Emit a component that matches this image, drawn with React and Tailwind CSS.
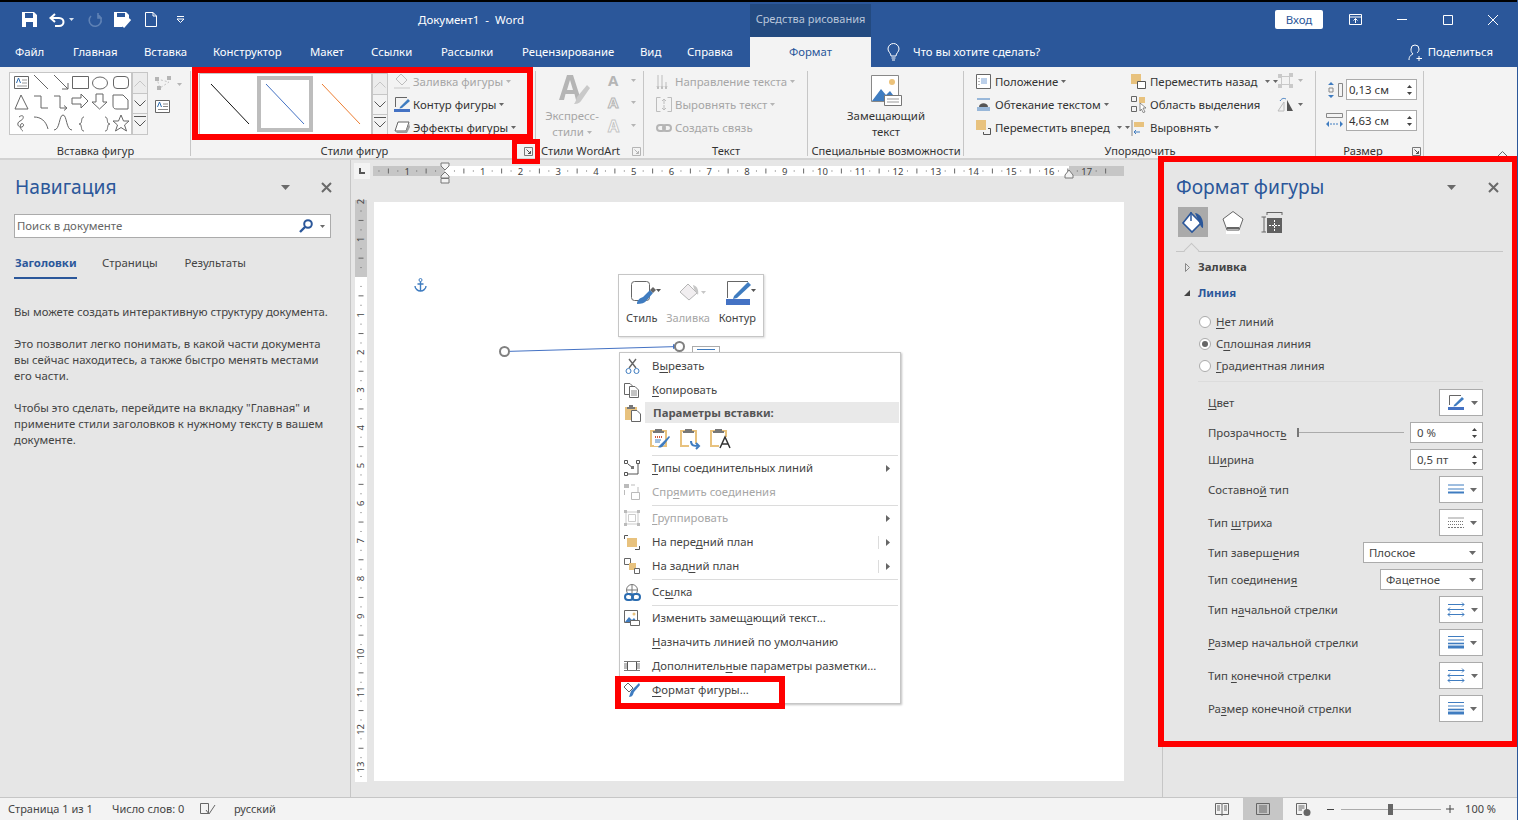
import React from "react";

const S = ({ w, h, children, className = "" }) => (
  <svg width={w} height={h} viewBox={`0 0 ${w} ${h}`} fill="none" className={`shrink-0 overflow-visible ${className}`}>
    {children}
  </svg>
);

// "В_ырезать" -> the letter after _ is underlined
const U = ({ t }) => {
  const i = t.indexOf("_");
  if (i < 0) return <span>{t}</span>;
  return (
    <span>
      {t.slice(0, i)}
      <span className="underline underline-offset-2">{t[i + 1]}</span>
      {t.slice(i + 2)}
    </span>
  );
};

const Caret = ({ c = "#6a6a6a", w = 7, h = 4, className = "" }) => (
  <S w={w} h={h} className={className}>
    <path d={`M0 0H${w}L${w / 2} ${h}Z`} fill={c} />
  </S>
);

const Close = () => (
  <S w={11} h={11}>
    <path d="M1 1L10 10M10 1L1 10" stroke="#6a6a6a" strokeWidth="2" />
  </S>
);

const Launcher = ({ off }) => (
  <S w={9} h={9}>
    <path d="M.5.5H8.5V8.5H.5Z" stroke={off ? "#b5b5b5" : "#777"} />
    <path d="M2.5 2.5L6.5 6.5M6.5 4V6.5H4" stroke={off ? "#b5b5b5" : "#555"} />
  </S>
);

/* ---------- title bar ---------- */
const QatSave = () => (
  <S w={15} h={15}>
    <path d="M0 0H12L15 3V15H0Z" fill="#fff" />
    <path d="M3 1H11V6H3Z" fill="#2b579a" />
    <path d="M4 10H11V15H4Z" fill="#2b579a" />
  </S>
);

function TitleBar() {
  return (
    <div className="flex h-[35px] items-center bg-[#2b579a] text-white">
      <div className="ml-[15px] flex h-full w-[180px] items-center">
        <div className="flex w-[28px] justify-center"><QatSave /></div>
        <div className="flex w-[39px] items-center pl-[6px]">
          <S w={17} h={14}>
            <path d="M6 1L1.5 5L6 9" stroke="#fff" strokeWidth="2" />
            <path d="M2 5H10C16 5 16 13 10 13H6" stroke="#fff" strokeWidth="2" />
          </S>
          <Caret c="#d9e2ef" w={5} h={3} className="ml-[3px]" />
        </div>
        <div className="flex w-[26px] justify-center">
          <S w={14} h={14}>
            <path d="M3 3A6 6 0 1 0 10 2M10 0V5H14" stroke="#5f82b5" strokeWidth="1.6" />
          </S>
        </div>
        <div className="flex w-[29px] justify-center">
          <S w={17} h={16}>
            <path d="M0 0H12L15 3V7L8 15H0Z" fill="#fff" />
            <path d="M3 1H11V5H3Z" fill="#2b579a" />
            <path d="M9 15L16 7" stroke="#fff" strokeWidth="3" />
          </S>
        </div>
        <div className="flex w-[28px] justify-center">
          <S w={12} h={15}>
            <path d="M.5.5H8L11.5 4V14.5H.5Z M8 .5V4H11.5" stroke="#fff" />
          </S>
        </div>
        <div className="flex w-[30px] justify-center">
          <S w={9} h={7}>
            <path d="M1 .5H8M1 3H8L4.5 6.5Z" stroke="#fff" />
          </S>
        </div>
      </div>
      <div className="w-[223px]" />
      <div className="w-[332px] text-[11.5px]">Документ1 &nbsp;-&nbsp; Word</div>
      <div className="mt-[2px] flex h-[33px] w-[121px] items-center justify-center bg-[#234a80] pb-[2px] text-[11px] text-[#b9c6da]">
        Средства рисования
      </div>
      <div className="w-[404px]" />
      <div className="flex h-[19px] w-[48px] items-center justify-center rounded-[2px] bg-white text-[11.5px] text-[#2b579a]">Вход</div>
      <div className="ml-[22px] flex w-[21px] justify-center">
        <S w={13} h={11}>
          <path d="M.5.5H12.5V10.5H.5ZM0 3H13" stroke="#fff" />
          <path d="M6.5 9V4.5M4.5 6.5L6.5 4.5L8.5 6.5" stroke="#fff" />
        </S>
      </div>
      <div className="ml-[31px]"><S w={10} h={1}><path d="M0 .5H10" stroke="#fff" /></S></div>
      <div className="ml-[36px]"><S w={10} h={10}><path d="M.5.5H9.5V9.5H.5Z" stroke="#fff" /></S></div>
      <div className="ml-[35px]"><S w={10} h={10}><path d="M0 0L10 10M10 0L0 10" stroke="#fff" /></S></div>
    </div>
  );
}

/* ---------- tabs ---------- */
const tabs = [
  ["Файл", 58], ["Главная", 71], ["Вставка", 69], ["Конструктор", 97], ["Макет", 61],
  ["Ссылки", 70], ["Рассылки", 81], ["Рецензирование", 118], ["Вид", 47], ["Справка", 63],
];

function TabBar() {
  return (
    <div className="flex h-[30px] bg-[#2b579a] pl-[15px] text-[11.35px] text-white">
      {tabs.map(([t, w]) => (
        <div key={t} style={{ width: w }} className="flex items-center">{t}</div>
      ))}
      <div className="flex w-[121px] items-center justify-center bg-[#f3f3f3] text-[#2b579a]">Формат</div>
      <div className="ml-[16px] flex items-center">
        <S w={13} h={17}>
          <path d="M4 12C4 9 1 8 1 5A5.5 5.5 0 0 1 12 5C12 8 9 9 9 12ZM4.5 14H8.5M5 16H8" stroke="#fff" />
        </S>
      </div>
      <div className="ml-[13px] flex items-center">Что вы хотите сделать?</div>
      <div className="ml-auto mr-[24px] flex items-center gap-[5px]">
        <S w={15} h={17}>
          <path d="M1 16C1 12 3 11 5 10C3 8 3 7 3 5A4 4 0 0 1 11 5C11 7 10 8 9 9" stroke="#fff" />
          <path d="M11 12V17M8.5 14.5H14" stroke="#fff" />
        </S>
        Поделиться
      </div>
    </div>
  );
}

/* ---------- ribbon ---------- */
function Group({ w, label, launcher, off, sep = true, children }) {
  return (
    <div style={{ width: w }} className="relative flex h-full shrink-0 flex-col">
      <div className="h-[75px] shrink-0 overflow-hidden">{children}</div>
      <div className="flex h-[14px] items-center justify-center whitespace-nowrap text-[11.1px] text-[#333]">{label}</div>
      {launcher && (
        <div className="absolute bottom-[2px] right-[3px]"><Launcher off={off} /></div>
      )}
      {sep && <div className="absolute bottom-[2px] right-0 top-[2px] w-px bg-[#c6c6c6]" />}
    </div>
  );
}

const GalleryScroll = ({ big }) => (
  <div className={`flex w-[16px] flex-col border border-[#c6c6c6] bg-[#f3f3f3] ${big ? "h-[62px]" : "h-[63px]"}`}>
    <div className="flex h-[21px] items-center justify-center border-b border-[#c6c6c6] bg-[#ececec]">
      <S w={12} h={7}><path d="M.5 6.5L6 1L11.5 6.5" stroke="#c6c6c6" /></S>
    </div>
    <div className="flex h-[20px] items-center justify-center border-b border-[#c6c6c6]">
      <S w={12} h={7}><path d="M.5.5L6 6L11.5.5" stroke="#555" /></S>
    </div>
    <div className="flex flex-1 flex-col items-center gap-[3px] pt-[2px]">
      <div className="h-px w-[12px] bg-[#555]" />
      <S w={12} h={7}><path d="M.5.5L6 6L11.5.5" stroke="#555" /></S>
    </div>
  </div>
);

const TextboxIcon = () => (
  <S w={15} h={13}>
    <path d="M.5.5H14.5V12.5H.5Z" stroke="#666" fill="#fff" />
    <path d="M8 4H13M8 6.5H13M3 9.5H13" stroke="#888" />
    <path d="M2.5 7L4.5 2L6.5 7" stroke="#2b6cb0" />
  </S>
);

const ShapesGallery = () => (
  <div className="h-[63px] w-[123px] border border-[#c6c6c6] bg-white">
    <S w={121} h={61}>
      <g stroke="#666">
        <path d="M4.5 3.5H18.5V15.5H4.5Z" />
        <path d="M12 7H17M12 10H17M7 13H17" stroke="#999" />
        <path d="M6.5 10L8.5 5L10.5 10" stroke="#2b6cb0" />
        <path d="M24 2L38 16" />
        <path d="M44 2L58 16M52 16H58V10" />
        <path d="M62.5 3.5H78.5V15.5H62.5Z" />
        <ellipse cx="90" cy="10" rx="7.5" ry="6" />
        <rect x="103.5" y="3.5" width="15" height="12" rx="3.5" />
        <path d="M5 36L11 22L18 36Z" />
        <path d="M24 23H31V35H38" />
        <path d="M44 23H50V35H56M54 32.5L57 35L54 37.5" />
        <path d="M62 25H71V21L78 28L71 35V31H62Z" />
        <path d="M86 21H93V29H97L89.5 36L82 29H86Z" />
        <path d="M103 22H113L118 27V36H107C103 36 103 34 103 31Z" />
        <path d="M9 44C14 40 15 46 10 48C6 50 8 55 12 54C15 53 13 49 11 51C9 54 12 58 13 58" />
        <path d="M24 44C31 44 36 48 38 56" />
        <path d="M44 57C50 57 49 42 53 42C57 42 56 57 62 57" />
        <path d="M74 44C71 44 72 49 71 50C70 51 69 51 69 51C71 51 71 52 71 53C72 55 71 58 74 58" />
        <path d="M95 44C98 44 97 49 98 50C99 51 100 51 100 51C98 51 98 52 98 53C97 55 98 58 95 58" />
        <path d="M111 42L113.5 48H119L114.5 52L116.5 58L111 54.5L105.5 58L107.5 52L103 48H108.5Z" />
      </g>
    </S>
  </div>
);

const RibbonBtn = ({ icon, children, off, caret = true, className = "" }) => (
  <div className={`flex h-[23px] items-center whitespace-nowrap text-[11.4px] ${off ? "text-[#a6a6a6]" : "text-[#333]"} ${className}`}>
    <span className="flex w-[19px] shrink-0 items-center justify-start">{icon}</span>
    {children}
    {caret && <Caret c={off ? "#b5b5b5" : "#666"} w={5} h={3} className="ml-[3px]" />}
  </div>
);

const PenIcon = ({ w = 17, h = 15 }) => (
  <S w={w} h={h}>
    <path d="M13 .5H1.5V10" stroke="#666" />
    <path d="M6 10L14 2L16 4L8 11L5.5 11.5Z" fill="#3f7cc0" />
    <path d="M0 12H16V15H0Z" fill="#4472c4" />
  </S>
);

function Ribbon() {
  return (
    <div className="flex h-[93px] shrink-0 border-b-2 border-[#d2d2d2] bg-[#f3f3f3] pt-[2px]">
      <Group w={191} label="Вставка фигур">
        <div className="flex pl-[9px] pt-[3px]">
          <ShapesGallery />
          <GalleryScroll />
          <div className="ml-[6px] flex flex-col gap-[8px] pt-[4px]">
            <div className="flex items-center gap-[3px]">
              <S w={20} h={16}>
                <path d="M3 3L15 6L6 12Z" stroke="#c4c4c4" strokeDasharray="2 2" />
                <path d="M1 1H5V5H1ZM13 0H17V4H13ZM3 10H7V14H3Z" fill="#b5b5b5" />
              </S>
              <Caret c="#b5b5b5" w={5} h={3} />
            </div>
            <div className="pl-[1px]"><TextboxIcon /></div>
          </div>
        </div>
      </Group>

      <Group w={345} label={<span className="mr-[18px]">Стили фигур</span>} launcher>
        <div className="flex pl-[8px] pt-[4px]">
          <div className="flex h-[62px] w-[173px] items-center border border-[#c6c6c6] bg-white pl-[10px]">
            <S w={40} h={42}><path d="M1 1L39 41" stroke="#111" /></S>
            <div className="ml-[7px] flex h-[56px] w-[56px] items-center justify-center border-[4px] border-[#bdbdbd]">
              <S w={38} h={40}><path d="M0 0L38 40" stroke="#4472c4" /></S>
            </div>
            <S w={40} h={42} className="ml-[8px]"><path d="M1 1L39 41" stroke="#ed7d31" /></S>
          </div>
          <GalleryScroll big />
          <div className="ml-[6px] -mt-[3px] flex flex-col">
            <RibbonBtn off icon={
              <S w={17} h={17}>
                <path d="M7 1L13 7L8 12L2 6Z" stroke="#bdbdbd" />
                <path d="M0 14H16V16H0Z" fill="#dedede" />
              </S>}>Заливка фигуры</RibbonBtn>
            <RibbonBtn icon={<PenIcon />}>Контур фигуры</RibbonBtn>
            <RibbonBtn icon={
              <S w={17} h={13}>
                <path d="M4 1H15L12 10H1Z" fill="#fff" stroke="#666" />
                <path d="M1 10H12L15 2L16 6L13 12H3Z" fill="#a0a0a0" />
              </S>}>Эффекты фигуры</RibbonBtn>
          </div>
        </div>
      </Group>

      <Group w={108} label={<span className="mr-[19px]">Стили WordArt</span>} launcher off>
        <div className="flex pl-[8px] pt-[4px]">
          <div className="flex w-[56px] flex-col items-center text-[11.4px] leading-[16px] text-[#a6a6a6]">
            <S w={34} h={32} className="mb-[3px] ml-[3px]">
              <path d="M2 27L10 2H16L24 27H19L17.5 21H8.5L7 27ZM10 17H16L13 7Z" fill="#b5b5b5" />
              <path d="M20 24L30 12L33 15L24 28C22 31 18 31 17 31C19 29 19 26 20 24Z" fill="#c9c9c9" />
            </S>
            <span>Экспресс-</span>
            <span className="flex items-center gap-[3px]">стили <Caret c="#b5b5b5" w={5} h={3} /></span>
          </div>
          <div className="-mt-[4px] ml-[8px] flex flex-col">
            <div className="flex h-[22px] w-[28px] items-center justify-between text-[15px] font-bold text-[#b5b5b5]">A<Caret c="#b5b5b5" w={5} h={3} /></div>
            <div className="flex h-[22px] w-[28px] items-center justify-between text-[15px] font-bold text-transparent [-webkit-text-stroke:1px_#b5b5b5]">A<Caret c="#b5b5b5" w={5} h={3} /></div>
            <div className="flex h-[25px] w-[28px] items-center justify-between text-[16px] font-bold text-white [-webkit-text-stroke:1px_#c6c6c6]">A<Caret c="#b5b5b5" w={5} h={3} /></div>
          </div>
        </div>
      </Group>

      <Group w={164} label="Текст">
        <div className="flex flex-col pl-[12px] pt-[1px]">
          <RibbonBtn off icon={
            <S w={16} h={16}><path d="M2 1V15M6 1V15M10 8V15M1 12L2 15L3 12M5 12L6 15L7 12M9 12L10 15L11 12" stroke="#bdbdbd" /></S>}>Направление текста</RibbonBtn>
          <RibbonBtn off icon={
            <S w={16} h={15}><path d="M4.5.5H.5V14.5H4.5M11.5.5H15.5V14.5H11.5M8 2V7M6 4L8 2L10 4M8 8V13M6 11L8 13L10 11" stroke="#bdbdbd" /></S>}>Выровнять текст</RibbonBtn>
          <RibbonBtn off caret={false} icon={
            <S w={16} h={8}><rect x="1" y="1" width="8" height="6" rx="3" stroke="#b5b5b5" strokeWidth="2" /><rect x="7" y="1" width="8" height="6" rx="3" stroke="#b5b5b5" strokeWidth="2" /></S>}>Создать связь</RibbonBtn>
        </div>
      </Group>

      <Group w={156} label="Специальные возможности">
        <div className="flex flex-col items-center pt-[6px] text-[11.4px] leading-[16px] text-[#333]">
          <S w={31} h={31} className="mb-[2px]">
            <path d="M.5.5H27.5V26.5H.5Z" stroke="#888" fill="#fff" />
            <circle cx="21" cy="7" r="3" fill="#ecc27a" />
            <path d="M1 26L10 14L15 20L19 16L25 24V26Z" fill="#3f7cc0" />
            <path d="M13.5 20.5H30.5V30.5H13.5Z" stroke="#777" fill="#fff" />
            <path d="M16 24H28M16 27H28" stroke="#999" />
          </S>
          <span>Замещающий</span>
          <span>текст</span>
        </div>
      </Group>

      <Group w={352} label="Упорядочить">
        <div className="flex pl-[12px] pt-[1px]">
          <div className="flex w-[155px] flex-col">
            <RibbonBtn icon={
              <S w={15} h={15}>
                <path d="M.5.5H14.5V14.5H.5Z" stroke="#666" fill="#fff" />
                <path d="M5 4H11V10H5Z" fill="#bcd0ea" />
                <path d="M3 4V5M3 7V8M3 10V11" stroke="#777" />
              </S>}>Положение</RibbonBtn>
            <RibbonBtn icon={
              <S w={15} h={13}>
                <path d="M1 1H14M1 12H14M1 10H14" stroke="#3f7cc0" />
                <path d="M3 9C3 4 12 4 12 9Z" fill="#555" />
              </S>}>Обтекание текстом</RibbonBtn>
            <RibbonBtn icon={
              <S w={15} h={15}>
                <path d="M0 0H10V10H0Z" fill="#e8c27e" />
                <path d="M12 8.5H14.5V14.5H7.5V12" stroke="#555" />
              </S>}>
              Переместить вперед<span className="ml-[7px]"><Caret w={5} h={3} /></span>
            </RibbonBtn>
          </div>
          <div className="flex w-[146px] flex-col">
            <RibbonBtn icon={
              <S w={15} h={15}>
                <path d="M0 0H10V10H0Z" fill="#e8c27e" />
                <path d="M6.5 7.5H14.5V14.5H6.5Z" stroke="#555" fill="#fff" />
              </S>}>
              Переместить назад<span className="ml-[8px]"><Caret w={5} h={3} /></span>
            </RibbonBtn>
            <RibbonBtn caret={false} icon={
              <S w={16} h={17}>
                <path d="M.5.5H5.5V5.5H.5ZM.5 10.5H5.5V15.5H.5Z" stroke="#666" />
                <path d="M8 1H14V7H8Z" fill="#e8c27e" />
                <path d="M9 7L15 12L12 12L14 16L12 16.5L10.5 13L9 15Z" fill="#fff" stroke="#666" strokeWidth=".7" />
              </S>}>Область выделения</RibbonBtn>
            <RibbonBtn icon={
              <S w={15} h={16}>
                <path d="M1 0V16" stroke="#888" />
                <path d="M3 2H13V7H3Z" fill="#e8c27e" />
                <path d="M7 12H3M5 10L3 12L5 14M9 12H7" stroke="#3f7cc0" />
              </S>}>Выровнять</RibbonBtn>
          </div>
          <div className="flex flex-col gap-[5px] pt-[3px]">
            <div className="flex items-center gap-[4px]">
              <S w={17} h={15}>
                <path d="M1 1H5V5H1ZM12 0H16V4H12ZM1 11H5V15H1ZM12 11H16V15H12Z" fill="#c9c9c9" />
                <path d="M4.5 3.5H12.5V11.5H4.5Z" stroke="#c9c9c9" />
              </S>
              <Caret c="#b5b5b5" w={5} h={3} />
            </div>
            <div className="mt-[4px] flex items-center gap-[4px]">
              <S w={17} h={15}>
                <path d="M1 14L7 5V14Z" stroke="#bbb" />
                <path d="M10 3L16 14H10Z" fill="#555" />
                <path d="M3 4C5 1 7 1 9 2" stroke="#3f7cc0" />
              </S>
              <Caret w={5} h={3} />
            </div>
          </div>
        </div>
      </Group>

      <Group w={108} label={<span className="mr-[14px]">Размер</span>} launcher>
        <div className="flex flex-col gap-[10px] pl-[10px] pt-[10px]">
          {[["0,13 см", 0], ["4,63 см", 1]].map(([v, i]) => (
            <div key={v} className="flex items-center gap-[3px]">
              {i === 0 ? (
                <S w={17} h={16}>
                  <path d="M5 0L2 3H8ZM5 16L2 13H8Z" fill="#3f7cc0" />
                  <path d="M3 6H7V10H3Z" stroke="#888" />
                  <path d="M12.5 1.5H16.5V14.5H12.5Z" stroke="#888" />
                </S>
              ) : (
                <S w={17} h={16}>
                  <path d="M.5.5H16.5V4.5H.5Z" stroke="#888" />
                  <path d="M0 11L3 8V14ZM17 11L14 8V14Z" fill="#3f7cc0" />
                  <path d="M4 11H13" stroke="#3f7cc0" strokeDasharray="2 1" />
                </S>
              )}
              <div className="flex h-[21px] w-[71px] items-center justify-between border border-[#ababab] bg-white pl-[2px] pr-[4px] text-[11.4px] text-[#333]">
                {v}
                <Spin />
              </div>
            </div>
          ))}
        </div>
      </Group>

      <div className="relative flex-1">
        <div className="absolute bottom-[1px] right-[9px]">
          <S w={11} h={6}><path d="M.5 5.5L5.5.5L10.5 5.5" stroke="#666" /></S>
        </div>
      </div>
    </div>
  );
}

const Spin = () => (
  <span className="flex flex-col gap-[4px]">
    <S w={5} h={3}><path d="M2.5 0L5 3H0Z" fill="#444" /></S>
    <S w={5} h={3}><path d="M0 0H5L2.5 3Z" fill="#444" /></S>
  </span>
);

/* ---------- navigation pane ---------- */
function NavPane() {
  return (
    <div className="w-[351px] shrink-0 border-r border-[#c6c6c6] bg-[#e6e6e6] pl-[14px] pr-[19px] pt-[13px] text-[#444]">
      <div className="flex h-[28px] items-center justify-between">
        <span className="pl-[1px] text-[19.2px] text-[#2b579a]">Навигация</span>
        <span className="-mr-[1px] flex items-center gap-[31px]">
          <Caret w={9} h={5} />
          <Close />
        </span>
      </div>
      <div className="mt-[13px] flex h-[24px] items-center border border-[#ababab] bg-white pl-[2px] pr-[5px] text-[11.4px] text-[#666]">
        Поиск в документе
        <span className="ml-auto flex items-center gap-[7px]">
          <S w={14} h={14}>
            <circle cx="9" cy="5" r="3.8" stroke="#2b579a" strokeWidth="2" />
            <path d="M6 8L1 13" stroke="#2b579a" strokeWidth="2.4" />
          </S>
          <Caret w={5} h={3} />
        </span>
      </div>
      <div className="mt-[15px] flex h-[26px] items-start text-[11.4px]">
        <span className="h-[26px] w-[63px] border-b-2 border-[#2b579a] pl-[1px] pt-[1px] font-bold text-[#2b579a]">Заголовки</span>
        <span className="ml-[25px] pt-[1px]">Страницы</span>
        <span className="ml-[27px] pt-[1px]">Результаты</span>
      </div>
      <div className="mt-[25px] flex flex-col gap-[16px] whitespace-nowrap text-[11.35px] leading-[16px]">
        <p>Вы можете создать интерактивную структуру документа.</p>
        <p>Это позволит легко понимать, в какой части документа<br />вы сейчас находитесь, а также быстро менять местами<br />его части.</p>
        <p>Чтобы это сделать, перейдите на вкладку "Главная" и<br />примените стили заголовков к нужному тексту в вашем<br />документе.</p>
      </div>
    </div>
  );
}

/* ---------- rulers and page ---------- */
const HRuler = () => {
  const ticks = [];
  for (let i = -1.75; i <= 17.5; i += 0.25) {
    const x = 72 + i * 37.75;
    if (Number.isInteger(i)) {
      if (i !== 0)
        ticks.push(<text key={i} x={x} y={11.5} textAnchor="middle" fontSize="9.5" fill="#444" fontFamily="Noto Sans">{Math.abs(i)}</text>);
    } else if (i * 2 === Math.floor(i * 2)) {
      ticks.push(<path key={i} d={`M${x} 5.5V10.5`} stroke="#666" />);
    } else {
      ticks.push(<path key={i} d={`M${x} 7.5V8.5`} stroke="#666" />);
    }
  }
  return (
    <S w={751} h={16}>
      <rect y="3" width="751" height="10" fill="#fff" />
      <rect y="3" width="72" height="10" fill="#c6c6c6" />
      <rect x="696" y="3" width="55" height="10" fill="#c6c6c6" />
      {ticks}
      <path d="M68 0H76V3L72 7L68 3ZM72 9L76 13V15H68V13Z" fill="#f3f3f3" stroke="#777" />
      <path d="M68 15.5H76V20H68Z" fill="#f3f3f3" stroke="#777" />
      <path d="M696 7L692 12V15H700V12Z" fill="#f3f3f3" stroke="#777" />
    </S>
  );
};

const VRuler = () => {
  const ticks = [];
  for (let i = -2; i <= 13.25; i += 0.25) {
    const y = 77 + i * 37.7;
    if (Number.isInteger(i)) {
      if (i !== 0)
        ticks.push(
          <text key={i} x={6} y={y} textAnchor="middle" dominantBaseline="middle" fontSize="9.5" fill="#444" fontFamily="Noto Sans" transform={`rotate(-90 6 ${y})`}>
            {Math.abs(i)}
          </text>
        );
    } else if (i * 2 === Math.floor(i * 2)) {
      ticks.push(<path key={i} d={`M3.5 ${y}H8.5`} stroke="#666" />);
    } else {
      ticks.push(<path key={i} d={`M5.5 ${y}H6.5`} stroke="#666" />);
    }
  }
  return (
    <S w={12} h={582}>
      <rect width="12" height="582" fill="#fff" />
      <rect width="12" height="77" fill="#c6c6c6" />
      {ticks}
    </S>
  );
};

function DocArea() {
  return (
    <div className="flex min-w-0 flex-1 flex-col bg-[#e6e6e6]">
      <div className="flex h-[42px] pl-[3px] pt-[3px]">
        <div className="flex h-[16px] w-[16px] items-center justify-center bg-[#f3f3f3]">
          <S w={6} h={6}><path d="M1 0V5H6" stroke="#555" strokeWidth="2" /></S>
        </div>
        <div className="ml-[3px]"><HRuler /></div>
      </div>
      <div className="flex pl-[4px]">
        <div className="-mt-[2px]"><VRuler /></div>
        <div className="ml-[7px] h-[579px] w-[750px] bg-white" />
      </div>
    </div>
  );
}

/* ---------- format pane ---------- */
const CtlIcon = ({ kind }) => {
  if (kind === "pen") return <PenIcon />;
  if (kind === "compound")
    return (
      <S w={16} h={11}>
        <path d="M0 1H16M0 5H16" stroke="#3f7cc0" />
        <path d="M0 8.5H16" stroke="#3f7cc0" strokeWidth="2" />
      </S>
    );
  if (kind === "dash")
    return (
      <S w={16} h={11}>
        <path d="M0 1H16" stroke="#999" />
        <path d="M0 4.5H16M0 7.5H16" stroke="#777" strokeDasharray="1 1" />
        <path d="M0 10.5H16" stroke="#777" strokeDasharray="2 1" />
      </S>
    );
  if (kind === "arrow")
    return (
      <S w={17} h={15}>
        <path d="M0 2.5H16M14 .5L16 2.5L14 4.5M0 7.5H16M2 5.5L0 7.5L2 9.5M0 12.5H16M2 10.5L0 12.5L2 14.5M14 10.5L16 12.5L14 14.5" stroke="#3f7cc0" />
      </S>
    );
  return (
    <S w={16} h={13}>
      <path d="M0 .5H16M0 4H16" stroke="#3f7cc0" />
      <path d="M0 7.5H16" stroke="#3f7cc0" strokeWidth="1.6" />
      <path d="M0 11H16" stroke="#3f7cc0" strokeWidth="3" />
    </S>
  );
};

const IconCtl = ({ kind }) => (
  <div className="flex h-[27px] w-[44px] items-center gap-[6px] border border-[#ababab] bg-white pl-[8px]">
    <CtlIcon kind={kind} />
    <Caret w={7} h={4} />
  </div>
);

const SpinCtl = ({ v }) => (
  <div className="flex h-[21px] w-[73px] items-center justify-between border border-[#ababab] bg-white pl-[6px] pr-[5px] text-[11.4px] text-[#444]">
    {v}
    <Spin />
  </div>
);

const SelectCtl = ({ v, w }) => (
  <div style={{ width: w }} className="flex h-[21px] items-center justify-between border border-[#ababab] bg-white pl-[5px] pr-[6px] text-[11.4px] text-[#444]">
    {v}
    <Caret w={7} h={4} />
  </div>
);

const rows = [
  ["_Цвет", <IconCtl kind="pen" />, 27],
  ["Прозрачност_ь", <SpinCtl v="0 %" />, 21],
  ["Ш_ирина", <SpinCtl v="0,5 пт" />, 21],
  ["Составно_й тип", <IconCtl kind="compound" />, 27],
  ["Тип _штриха", <IconCtl kind="dash" />, 27],
  ["Тип заверш_ения", <SelectCtl v="Плоское" w={120} />, 21],
  ["Тип соединени_я", <SelectCtl v="Фацетное" w={103} />, 21],
  ["Тип н_ачальной стрелки", <IconCtl kind="arrow" />, 27],
  ["_Размер начальной стрелки", <IconCtl kind="size" />, 27],
  ["Тип _конечной стрелки", <IconCtl kind="arrow" />, 27],
  ["Ра_змер конечной стрелки", <IconCtl kind="size" />, 27],
];

const Radio = ({ on, t }) => (
  <div className="flex h-[22px] items-center gap-[5px]">
    <span className="flex h-[12px] w-[12px] items-center justify-center rounded-full border border-[#ababab] bg-white">
      {on && <span className="h-[6px] w-[6px] rounded-full bg-[#666]" />}
    </span>
    <U t={t} />
  </div>
);

function FormatPane() {
  return (
    <div className="relative w-[354px] shrink-0 bg-[#e6e6e6] pt-[13px] text-[11.4px] text-[#444]">
      <div className="flex h-[28px] items-center justify-between pl-[13px] pr-[18px]">
        <span className="text-[19.2px] text-[#2b579a]">Формат фигуры</span>
        <span className="flex items-center gap-[32px]">
          <Caret w={9} h={5} />
          <Close />
        </span>
      </div>
      <div className="mt-[6px] flex h-[30px] items-center pl-[15px]">
        <div className="flex h-[30px] w-[30px] items-center justify-center bg-[#aaaaaa]">
          <S w={24} h={24}>
            <path d="M10 3L20 13L11 22L2 13Z" fill="#fff" stroke="#2b579a" strokeWidth="1.6" />
            <path d="M10 2V11" stroke="#2b579a" strokeWidth="1.5" />
            <path d="M14 3C20 4 23 10 22 18C20 18 19 14 17 10Z" fill="#2b579a" />
          </S>
        </div>
        <div className="ml-[10px] flex w-[30px] justify-center">
          <S w={22} h={24}>
            <path d="M11 1.5L21 9L17 20H5L1 9Z" fill="#fff" stroke="#666" />
            <path d="M5 18H17" stroke="#666" strokeWidth="2" />
            <path d="M4 21H18V24H4Z" fill="#fff" />
          </S>
        </div>
        <div className="ml-[9px] flex w-[30px] justify-center">
          <S w={22} h={21}>
            <path d="M6 .5H21M6 0V3M21 0V3M.5 5H5M.5 20H5M3 5V20" stroke="#666" />
            <path d="M6 6H21V21H6Z" fill="#606060" />
            <path d="M13.5 8V19M8 13.5H19" stroke="#fff" strokeDasharray="2 1" />
          </S>
        </div>
      </div>
      <div className="relative ml-[13px] mr-[14px] mt-[14px] h-px bg-[#c6c6c6]">
        <div className="absolute -top-[6px] left-[10px] h-[11px] w-[11px] rotate-45 border-l border-t border-[#c6c6c6] bg-[#e6e6e6]" />
      </div>
      <div className="ml-[22px] mt-[6px] flex h-[18px] items-center gap-[8px] font-bold">
        <S w={5} h={9}><path d="M.5.5L4.5 4.5L.5 8.5Z" stroke="#888" /></S>
        Заливка
      </div>
      <div className="ml-[21px] mt-[8px] flex h-[18px] items-center gap-[8px] font-bold text-[#2b579a]">
        <S w={6} h={6}><path d="M6 0V6H0Z" fill="#444" /></S>
        Линия
      </div>
      <div className="ml-[36px] mt-[9px] flex flex-col">
        <Radio t="_Нет линий" />
        <Radio on t="С_плошная линия" />
        <Radio t="_Градиентная линия" />
      </div>
      <div className="ml-[35px] mr-[34px] mt-[4px] h-px bg-[#dcdcdc]" />
      <div className="mt-[7px] flex flex-col gap-[6px] pl-[45px] pr-[34px]">
        {rows.map(([label, ctl, h]) => (
          <div key={label} style={{ height: h }} className="flex items-center justify-between">
            <span className="whitespace-nowrap"><U t={label} /></span>
            {label.startsWith("Прозрачност") ? (
              <div className="flex items-center gap-[6px]">
                <div className="relative h-px w-[107px] bg-[#ababab]">
                  <div className="absolute -top-[4px] left-0 h-[9px] w-[2px] bg-[#777]" />
                </div>
                {ctl}
              </div>
            ) : ctl}
          </div>
        ))}
      </div>
    </div>
  );
}

/* ---------- context menu ---------- */
const Doc = ({ x = 0, y = 0 }) => (
  <path d={`M${x + .5} ${y + .5}H${x + 6}L${x + 9.5} ${y + 4}V${y + 11.5}H${x + .5}Z`} fill="#fff" stroke="#666" />
);

const menuIcons = {
  cut: (
    <S w={15} h={15}>
      <path d="M4 9L11 0M11 9L4 0" stroke="#666" strokeWidth="1.4" />
      <circle cx="3.5" cy="12" r="2.5" stroke="#3f7cc0" />
      <circle cx="11.5" cy="12" r="2.5" stroke="#3f7cc0" />
    </S>
  ),
  copy: (
    <S w={16} h={15}>
      <Doc x={0} y={0} />
      <Doc x={5} y={3} />
      <path d="M7 8H13M7 10H13M7 12H13" stroke="#888" />
    </S>
  ),
  paste: (
    <S w={16} h={17}>
      <path d="M0 3H12V16H0Z" fill="#e8c27e" />
      <path d="M4 3V1H8V3H10V5H2V3Z" fill="#777" />
      <Doc x={6} y={6} />
    </S>
  ),
  conn: (
    <S w={16} h={16}>
      <path d="M.5 .5H3.5V3.5H.5ZM12.5 .5H15.5V3.5H12.5ZM.5 12.5H3.5V15.5H.5Z" stroke="#555" />
      <path d="M4 4L9 8M14 4V14H4" stroke="#555" />
      <path d="M7 6H10V9H7Z" fill="#777" />
    </S>
  ),
  straight: (
    <S w={16} h={16}>
      <path d="M0 0H5V4H0Z" fill="#bbb" />
      <path d="M7 1H11M14 3V8M.5 6V11M7.5 8.5H15.5V15.5H7.5Z" stroke="#bbb" />
    </S>
  ),
  group: (
    <S w={16} h={16}>
      <path d="M0 0H3V3H0ZM13 0H16V3H13ZM0 13H3V16H0ZM13 13H16V16H13Z" fill="#bbb" />
      <path d="M4.5 4.5H11.5V11.5H4.5ZM2 3V13M14 3V13M3 2H13M3 14H13" stroke="#ccc" />
    </S>
  ),
  front: (
    <S w={16} h={15}>
      <path d="M.5 4V.5H4" stroke="#555" />
      <path d="M3 3H13V12H3Z" fill="#e8c27e" />
      <path d="M15.5 11V14.5H11" stroke="#555" />
    </S>
  ),
  back: (
    <S w={16} h={16}>
      <path d="M.5 .5H6.5V6.5H.5Z" stroke="#666" />
      <path d="M5 5H12V12H5Z" fill="#e8c27e" />
      <path d="M10.5 10.5H15.5V15.5H10.5Z" stroke="#666" fill="#fff" />
    </S>
  ),
  link: (
    <S w={17} h={17}>
      <circle cx="8" cy="6" r="5.5" stroke="#777" />
      <path d="M3 6H13M8 .5V11" stroke="#777" />
      <rect x="1" y="10" width="8" height="6" rx="3" stroke="#2b6cb0" strokeWidth="2" />
      <rect x="8" y="10" width="8" height="6" rx="3" stroke="#2b6cb0" strokeWidth="2" />
    </S>
  ),
  alt: (
    <S w={16} h={16}>
      <path d="M.5 .5H13.5V12.5H.5Z" stroke="#666" />
      <path d="M1 12L5 7L8 10L10 8L13 12Z" fill="#3f7cc0" />
      <circle cx="10" cy="4" r="1.5" fill="#e8c27e" />
      <path d="M6.5 10.5H15.5V15.5H6.5Z" fill="#fff" stroke="#666" />
    </S>
  ),
  more: (
    <S w={16} h={14}>
      <path d="M3.5 2.5H12.5V11.5H3.5Z" stroke="#555" />
      <path d="M0 2.5H16M0 5H3M0 7H3M0 9H3M13 5H16M13 7H16M13 9H16M0 11.5H16" stroke="#777" />
    </S>
  ),
  fmt: (
    <S w={18} h={16}>
      <path d="M5 1L10 6L6 10L1 5Z" fill="#fff" stroke="#666" />
      <path d="M16 1L8 9L6 15C10 15 10 12 11 10L17 3Z" fill="#3f7cc0" />
    </S>
  ),
};

const Sep = () => <div className="ml-[32px] mr-[2px] h-[2px] border-b border-[#dcdcdc]" />;

const Item = ({ icon, t, off, sub, split }) => (
  <div className={`flex h-[24px] items-center text-[11.35px] ${off ? "text-[#a6a6a6]" : "text-[#444]"}`}>
    <div className="flex w-[32px] justify-center pr-[8px]">{menuIcons[icon]}</div>
    <span className="whitespace-nowrap"><U t={t} /></span>
    {sub && (
      <div className="ml-auto flex h-full items-center">
        {split && <div className="mr-[7px] h-[13px] w-px bg-[#dcdcdc]" />}
        <S w={4} h={7} className="mr-[10px]"><path d="M0 0L4 3.5L0 7Z" fill="#666" /></S>
      </div>
    )}
  </div>
);

const Clip = ({ children }) => (
  <S w={21} h={21}>
    <path d="M1 3H16V18H1Z" stroke="#e8c27e" strokeWidth="2" />
    <path d="M5 3V1H12V3H14V5H3V3Z" fill="#777" />
    {children}
  </S>
);

function ContextMenu() {
  return (
    <div className="absolute left-[619px] top-[352px] h-[352px] w-[282px] border border-[#c6c6c6] bg-white pt-[1px] shadow-[1px_1px_2px_rgba(0,0,0,0.25)]">
      <Item icon="cut" t="В_ырезать" />
      <Item icon="copy" t="_Копировать" />
      <div className="flex h-[21px] items-center">
        <div className="flex w-[25px] justify-center pl-[1px]">{menuIcons.paste}</div>
        <div className="mr-px flex h-full flex-1 items-center bg-[#e9e9e9] pl-[8px] text-[11.35px] font-bold text-[#555]">Параметры вставки:</div>
      </div>
      <div className="flex h-[31px] items-center gap-[9px] pl-[30px]">
        <Clip>
          <path d="M4 7H14V18H4Z" fill="#fff" />
          <path d="M5 9H13" stroke="#d0583d" strokeWidth="2" strokeDasharray="1 1" />
          <path d="M5 12H11M5 14H10" stroke="#3f7cc0" />
          <path d="M8 19L12 15L19 8L20 9L14 17C12 20 9 20 8 19Z" fill="#3f7cc0" />
        </Clip>
        <Clip>
          <path d="M9 16H20V21H9Z" fill="#fff" />
          <path d="M11 13C11 18 14 18 19 18M16 15L19 18L16 21" stroke="#3f7cc0" strokeWidth="2" />
        </Clip>
        <Clip>
          <path d="M9 9H21V21H9Z" fill="#fff" />
          <path d="M10 20L15 9L20 20M12 16H18" stroke="#333" strokeWidth="1.5" />
        </Clip>
      </div>
      <Sep />
      <Item icon="conn" t="_Типы соединительных линий" sub />
      <Item icon="straight" t="Спр_ямить соединения" off />
      <Sep />
      <Item icon="group" t="_Группировать" off sub />
      <Item icon="front" t="На пере_дний план" sub split />
      <Item icon="back" t="На зад_ний план" sub split />
      <Sep />
      <Item icon="link" t="Сс_ылка" />
      <Sep />
      <Item icon="alt" t="Изменить замещ_ающий текст..." />
      <Item t="_Назначить линией по умолчанию" />
      <Item icon="more" t="Дополнитель_ные параметры разметки..." />
      <Item icon="fmt" t="_Формат фигуры..." />
    </div>
  );
}

function MiniToolbar() {
  const col = "flex flex-col items-center gap-[6px]";
  return (
    <div className="absolute left-[618px] top-[274px] flex h-[63px] w-[146px] justify-between border border-[#c6c6c6] bg-white px-[7px] pt-[6px] text-[11px] leading-[14px] shadow-[1px_1px_2px_rgba(0,0,0,0.15)]">
      <div className={`${col} text-[#444]`}>
        <S w={30} h={24} className="translate-x-[4px]">
          <rect x=".5" y=".5" width="18" height="19" rx="3" stroke="#666" />
          <path d="M6 23C6 19 9 17 12 16L19 9L22 12L16 19C14 22 10 23 6 23Z" fill="#3f7cc0" />
          <path d="M19 9L22 6L25 9L22 12Z" fill="#666" />
          <path d="M25 8H30L27.5 11Z" fill="#555" />
        </S>
        Стиль
      </div>
      <div className={`${col} text-[#a6a6a6]`}>
        <S w={28} h={24} className="translate-x-[5px]">
          <path d="M9 3L18 12L10 19L1 11Z" fill="#f1eef0" stroke="#b5b5b5" />
          <path d="M14 4C18 5 20 9 19 14L15 8Z" fill="#c6c6c6" />
          <path d="M22 10H27L24.5 13Z" fill="#c6c6c6" />
        </S>
        Заливка
      </div>
      <div className={`${col} text-[#444]`}>
        <S w={30} h={24} className="translate-x-[4px]">
          <path d="M22 .5H1.5V17" stroke="#666" />
          <path d="M8 15L22 1L25 4L11 17L7 18Z" fill="#3f7cc0" />
          <path d="M0 18H24V24H0Z" fill="#4472c4" />
          <path d="M25 8H30L27.5 11Z" fill="#555" />
        </S>
        Контур
      </div>
    </div>
  );
}

const RedBox = ({ className }) => <div className={`absolute border-[#ff0000] ${className}`} />;

/* ---------- status bar ---------- */
function StatusBar() {
  return (
    <div className="flex h-[23px] shrink-0 items-center border-t border-[#c6c6c6] bg-[#f3f3f3] pl-[8px] text-[11px] text-[#444]">
      <span className="w-[104px]">Страница 1 из 1</span>
      <span className="w-[88px]">Число слов: 0</span>
      <S w={16} h={13}>
        <path d="M.5.5H8.5V10.5H.5Z" stroke="#666" />
        <path d="M6 7L9 11L15 2" stroke="#666" />
      </S>
      <span className="ml-[18px]">русский</span>
      <div className="ml-auto flex h-full items-center pr-[21px]">
        <S w={14} h={13}>
          <path d="M.5.5H6.5L7 1.5L7.5.5H13.5V11.5H.5ZM7 1.5V13M2 3H5M2 5H5M2 7H5M9 3H12M9 5H12M9 7H12" stroke="#666" />
        </S>
        <div className="ml-[14px] flex h-full w-[40px] items-center justify-center bg-[#c6c6c6]">
          <S w={14} h={12}>
            <path d="M.5.5H13.5V11.5H.5ZM3 3H11M3 5H11M3 7H11M3 9H11" stroke="#666" />
          </S>
        </div>
        <div className="ml-[13px]">
          <S w={15} h={13}>
            <path d="M.5.5H10.5V8M.5.5V11.5H6M2.5 3H8.5M2.5 5H8.5M2.5 7H6" stroke="#666" />
            <circle cx="11" cy="9.5" r="3.5" fill="#666" />
          </S>
        </div>
        <div className="ml-[16px]"><S w={7} h={1}><path d="M0 .5H7" stroke="#444" /></S></div>
        <div className="relative ml-[7px] h-px w-[100px] bg-[#ababab]">
          <div className="absolute -top-[5px] left-[47px] h-[11px] w-[5px] bg-[#666]" />
        </div>
        <div className="ml-[5px]"><S w={8} h={8}><path d="M0 4H8M4 0V8" stroke="#444" /></S></div>
        <span className="ml-[11px]">100 %</span>
      </div>
    </div>
  );
}

export default function App() {
  return (
    <div className="relative flex h-[820px] w-[1518px] flex-col overflow-hidden border-r border-[#2b579a] bg-[#e6e6e6] font-['Noto_Sans',sans-serif]">
      <div className="h-[2px] shrink-0 bg-black" />
      <TitleBar />
      <TabBar />
      <Ribbon />
      <div className="flex min-h-0 flex-1">
        <NavPane />
        <DocArea />
        <div className="w-px bg-[#c6c6c6]" />
        <FormatPane />
      </div>
      <StatusBar />

      {/* anchor */}
      <div className="absolute left-[414px] top-[278px]">
        <S w={13} h={14}>
          <circle cx="6.5" cy="2" r="1.5" stroke="#3f7cc0" />
          <path d="M6.5 3.5V13M3.5 6H9.5M1 8C1 11 4 13 6.5 13C9 13 12 11 12 8" stroke="#3f7cc0" strokeWidth="1.4" />
        </S>
      </div>

      {/* selected line with handles */}
      <div className="absolute left-[498px] top-[340px]">
        <S w={194} h={18}>
          <path d="M6 11.5L181 6.5" stroke="#4472c4" />
          <path d="M175 4V9L181 6.5Z" fill="#4472c4" />
          <circle cx="6.5" cy="11.5" r="4.5" fill="#fff" stroke="#808080" strokeWidth="2" />
          <circle cx="181.5" cy="6.5" r="4.5" fill="#fff" stroke="#808080" strokeWidth="2" />
        </S>
      </div>
      <div className="absolute left-[692px] top-[346px] h-[8px] w-[28px] border border-[#ababab] bg-white">
        <div className="mx-auto mt-[2px] h-px w-[18px] bg-[#3f7cc0]" />
      </div>

      <MiniToolbar />
      <ContextMenu />

      <RedBox className="left-[192px] top-[67px] h-[73px] w-[341px] border-[6px]" />
      <RedBox className="left-[512px] top-[139px] h-[25px] w-[28px] border-[5px]" />
      <RedBox className="left-[615px] top-[676px] h-[33px] w-[170px] border-[6px]" />
      <RedBox className="left-[1158px] top-[156px] h-[591px] w-[360px] border-[6px]" />
    </div>
  );
}
